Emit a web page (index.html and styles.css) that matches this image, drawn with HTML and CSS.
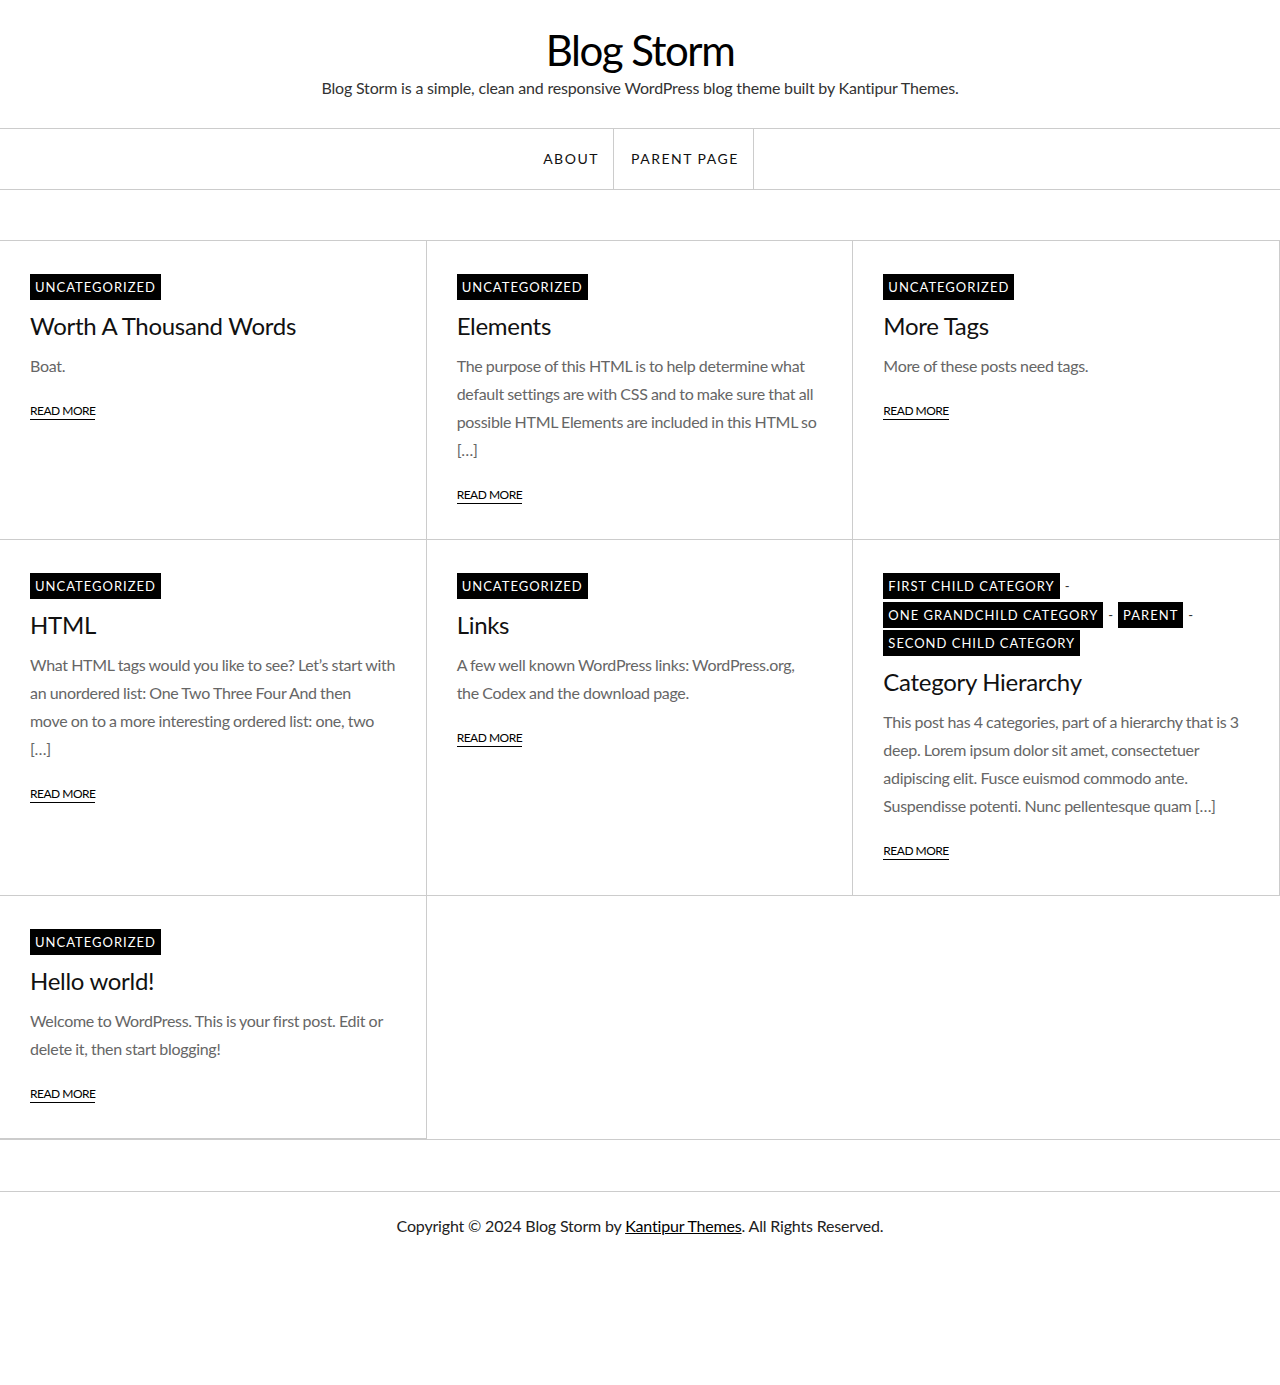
FILE: index.html
```html
<!DOCTYPE html>
<html lang="en">
<head>
<meta charset="utf-8">
<title>Blog Storm</title>
<link rel="stylesheet" href="styles.css">
</head>
<body>
<header class="site-header">
  <h1 class="site-title">Blog Storm</h1>
  <p class="site-desc">Blog Storm is a simple, clean and responsive WordPress blog theme built by Kantipur Themes.</p>
</header>
<nav class="main-nav">
  <ul class="menu">
    <li><a href="#">About</a></li>
    <li><a href="#">Parent Page</a></li>
  </ul>
</nav>
<main class="posts">
  <article class="post">
    <div class="cats"><a class="cat" href="#">Uncategorized</a></div>
    <h2 class="post-title">Worth A Thousand Words</h2>
    <p class="excerpt">Boat.</p>
    <a class="more" href="#">Read More</a>
  </article>
  <article class="post">
    <div class="cats"><a class="cat" href="#">Uncategorized</a></div>
    <h2 class="post-title">Elements</h2>
    <p class="excerpt">The purpose of this HTML is to help determine what<br>default settings are with CSS and to make sure that all<br>possible HTML Elements are included in this HTML so<br>[…]</p>
    <a class="more" href="#">Read More</a>
  </article>
  <article class="post">
    <div class="cats"><a class="cat" href="#">Uncategorized</a></div>
    <h2 class="post-title">More Tags</h2>
    <p class="excerpt">More of these posts need tags.</p>
    <a class="more" href="#">Read More</a>
  </article>
  <article class="post">
    <div class="cats"><a class="cat" href="#">Uncategorized</a></div>
    <h2 class="post-title">HTML</h2>
    <p class="excerpt">What HTML tags would you like to see? Let’s start with<br>an unordered list: One Two Three Four And then<br>move on to a more interesting ordered list: one, two<br>[…]</p>
    <a class="more" href="#">Read More</a>
  </article>
  <article class="post">
    <div class="cats"><a class="cat" href="#">Uncategorized</a></div>
    <h2 class="post-title">Links</h2>
    <p class="excerpt">A few well known WordPress links: WordPress.org,<br>the Codex and the download page.</p>
    <a class="more" href="#">Read More</a>
  </article>
  <article class="post">
    <div class="cats"><a class="cat" href="#">First Child Category</a><span class="sep">-</span><a class="cat" href="#">One Grandchild Category</a><span class="sep">-</span><a class="cat" href="#">Parent</a><span class="sep">-</span><a class="cat" href="#">Second Child Category</a></div>
    <h2 class="post-title">Category Hierarchy</h2>
    <p class="excerpt">This post has 4 categories, part of a hierarchy that is 3<br>deep. Lorem ipsum dolor sit amet, consectetuer<br>adipiscing elit. Fusce euismod commodo ante.<br>Suspendisse potenti. Nunc pellentesque quam […]</p>
    <a class="more" href="#">Read More</a>
  </article>
  <article class="post">
    <div class="cats"><a class="cat" href="#">Uncategorized</a></div>
    <h2 class="post-title">Hello world!</h2>
    <p class="excerpt">Welcome to WordPress. This is your first post. Edit or<br>delete it, then start blogging!</p>
    <a class="more" href="#">Read More</a>
  </article>
</main>
<footer class="site-footer">
  <p>Copyright © 2024 Blog Storm by <a href="#">Kantipur Themes</a>. All Rights Reserved.</p>
</footer>
</body>
</html>
```
FILE: styles.css
```css
* { box-sizing: border-box; }
html, body { margin: 0; padding: 0; background: #fff; }
body {
  font-family: "Lato", "Liberation Sans", sans-serif;
  font-size: 16px;
  color: #111;
}
a { color: inherit; text-decoration: none; }

.site-header {
  text-align: center;
  padding: 25px 0 28px;
}
.site-title {
  margin: 0;
  font-size: 42px;
  line-height: 50px;
  font-weight: 400;
  color: #000;
  letter-spacing: -1.5px;
}
.site-desc {
  margin: 1px 0 0;
  font-size: 16px;
  line-height: 24px;
  color: #333;
  letter-spacing: -0.18px;
}

.main-nav {
  border-top: 1px solid #ccc;
  border-bottom: 1px solid #ccc;
}
.menu {
  list-style: none;
  margin: 0;
  padding: 0;
  display: flex;
  justify-content: center;
}
.menu li { border-right: 1px solid #ccc; }
.menu a {
  display: block;
  padding: 0 14px 0 17px;
  line-height: 60px;
  font-size: 14px;
  letter-spacing: 1.5px;
  text-transform: uppercase;
  color: #111;
}

.posts {
  margin-top: 50px;
  display: grid;
  grid-template-columns: repeat(3, 1fr);
  border-top: 1px solid #ccc;
  border-bottom: 1px solid #ccc;
}
.post {
  border-right: 1px solid #ccc;
  border-bottom: 1px solid #ccc;
  padding: 33px 30px 35px;
}
.cats {
  display: flex;
  flex-wrap: wrap;
  align-items: center;
  row-gap: 2.5px;
  font-size: 13px;
  color: #333;
}
.cat {
  display: inline-block;
  background: #000;
  color: #fff;
  font-size: 13px;
  line-height: 18px;
  padding: 4px 5px;
  letter-spacing: 1px;
  text-transform: uppercase;
}
.sep { padding: 0 5px; }
.post-title {
  margin: 10px 0 0;
  font-size: 24px;
  line-height: 32px;
  font-weight: 400;
  color: #111;
  letter-spacing: -0.3px;
}
.excerpt {
  margin: 10px 0 0;
  font-size: 16px;
  line-height: 28px;
  color: #666;
  letter-spacing: -0.3px;
  word-spacing: -0.4px;
}
.more {
  display: inline-block;
  margin-top: 23px;
  font-size: 12px;
  line-height: 16px;
  text-transform: uppercase;
  letter-spacing: -0.5px;
  color: #000;
  border-bottom: 1px solid #000;
}

.site-footer {
  margin-top: 51px;
  border-top: 1px solid #ccc;
  padding: 22px 0 22px;
  text-align: center;
}
.site-footer p {
  margin: 0;
  font-size: 16px;
  line-height: 24px;
  color: #222;
  letter-spacing: -0.18px;
}
.site-footer a { text-decoration: underline; color: #000; }
```
